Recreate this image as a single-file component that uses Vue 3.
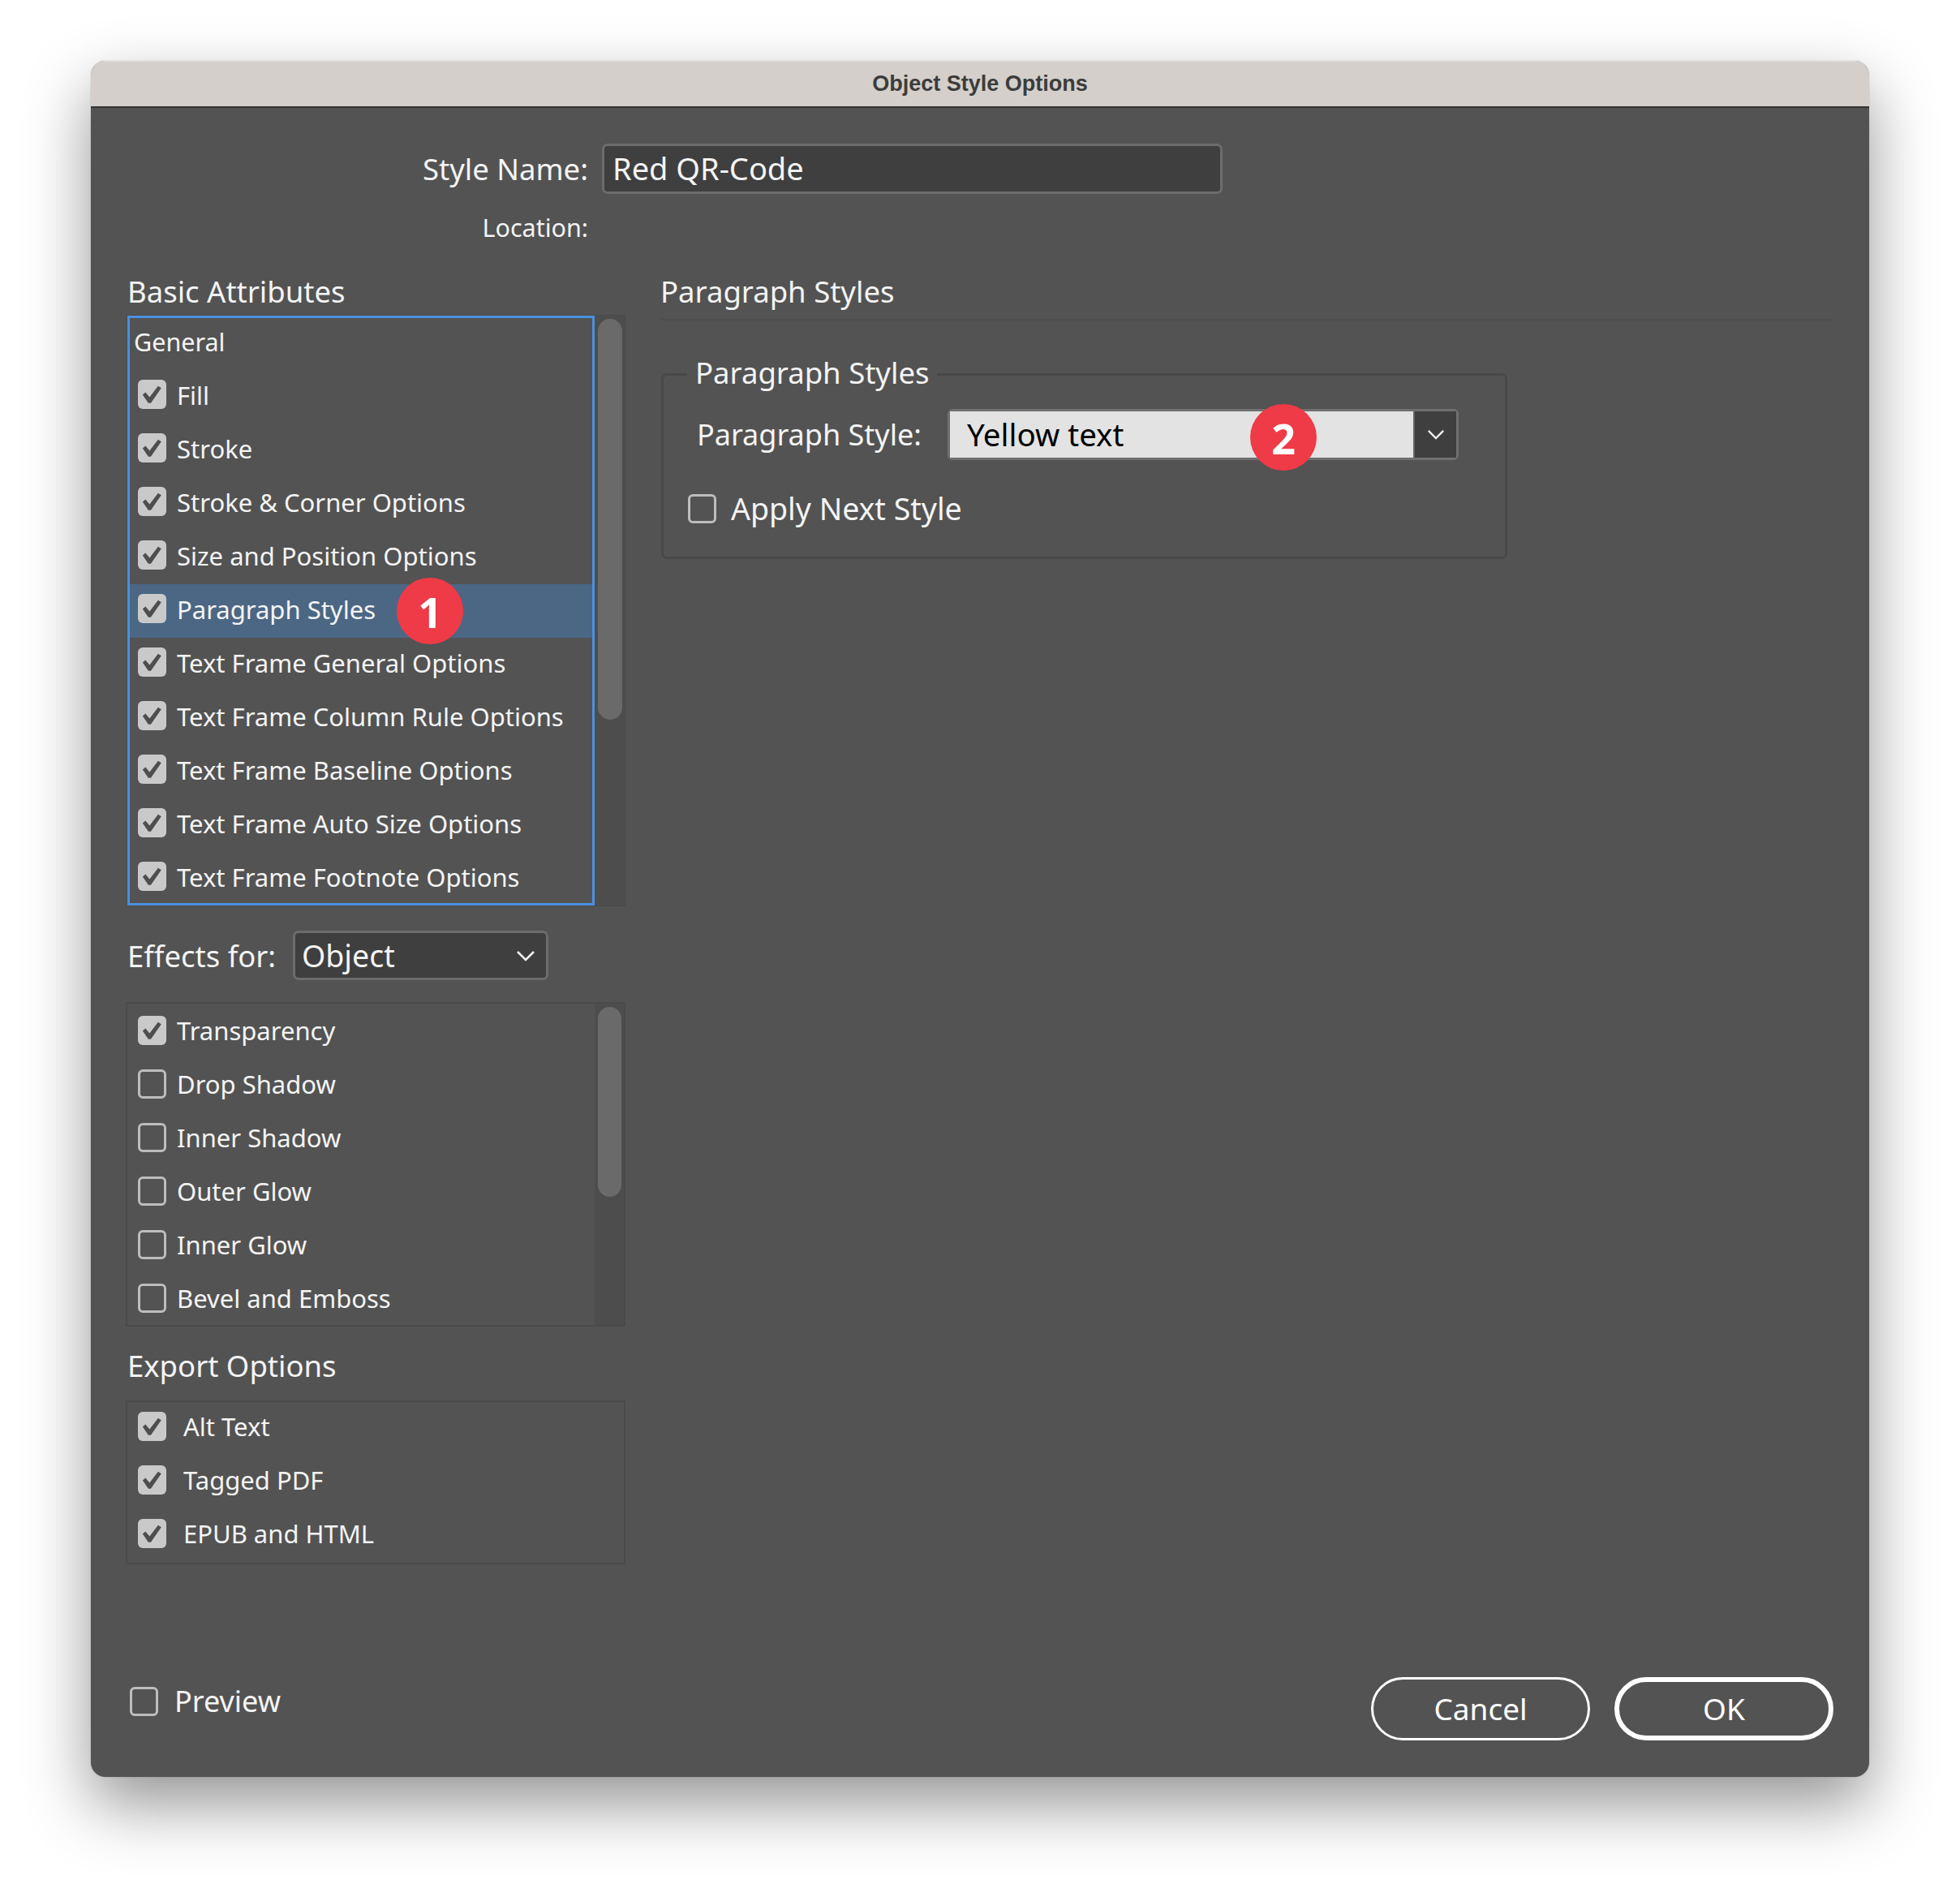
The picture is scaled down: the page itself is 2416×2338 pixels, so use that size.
<script setup>
const basicRows = [
  { label: 'Fill', on: true }, { label: 'Stroke', on: true }, { label: 'Stroke & Corner Options', on: true },
  { label: 'Size and Position Options', on: true }, { label: 'Paragraph Styles', on: true, selected: true },
  { label: 'Text Frame General Options', on: true }, { label: 'Text Frame Column Rule Options', on: true },
  { label: 'Text Frame Baseline Options', on: true }, { label: 'Text Frame Auto Size Options', on: true },
  { label: 'Text Frame Footnote Options', on: true }
]
const effectRows = [
  { label: 'Transparency', on: true }, { label: 'Drop Shadow', on: false }, { label: 'Inner Shadow', on: false },
  { label: 'Outer Glow', on: false }, { label: 'Inner Glow', on: false }, { label: 'Bevel and Emboss', on: false }
]
const exportRows = ['Alt Text', 'Tagged PDF', 'EPUB and HTML']
const checkPath = 'M6 18.5l3.6-3 5.2 6L25.6 7.5l4 2.6L16.4 29h-3.2z'
</script>

<template>
  <div class="page">
    <div class="dialog">
      <div class="titlebar">Object Style Options</div>
      <div class="name-row">
        <span class="name-label">Style Name:</span>
        <div class="name-input">Red QR-Code</div>
      </div>
      <div class="location-row">Location:</div>

      <div class="columns">
        <div class="left">
          <div class="heading pad2">Basic Attributes</div>
          <div class="basic-box">
            <div class="frame">
              <div class="general">General</div>
              <div v-for="r in basicRows" :key="r.label" class="row basic-row" :class="{ selected: r.selected }">
                <span class="check on"><svg viewBox="0 0 36 36" width="35" height="36"><path :d="checkPath" fill="#4e4e4e" /></svg></span>
                <span class="row-text">{{ r.label }}</span>
                <span v-if="r.selected" class="badge badge-one">1</span>
              </div>
            </div>
            <div class="track"><div class="thumb thumb-basic"></div></div>
          </div>

          <div class="effects-row">
            <span class="effects-label">Effects for:</span>
            <div class="select-dark">
              <span>Object</span>
              <svg viewBox="0 0 24 14" width="24" height="14"><path d="M2 2l10 10L22 2" fill="none" stroke="#f0f0f0" stroke-width="2.6" /></svg>
            </div>
          </div>

          <div class="effects-box">
            <div class="effects-rows">
              <div v-for="r in effectRows" :key="r.label" class="row">
                <span class="check" :class="{ on: r.on }"><svg v-if="r.on" viewBox="0 0 36 36" width="35" height="36"><path :d="checkPath" fill="#4e4e4e" /></svg></span>
                <span class="row-text">{{ r.label }}</span>
              </div>
            </div>
            <div class="track"><div class="thumb thumb-effects"></div></div>
          </div>

          <div class="heading pad2 export-heading">Export Options</div>
          <div class="export-box">
            <div class="export-rows">
              <div v-for="r in exportRows" :key="r" class="row export-row">
                <span class="check on"><svg viewBox="0 0 36 36" width="35" height="36"><path :d="checkPath" fill="#4e4e4e" /></svg></span>
                <span class="row-text">{{ r }}</span>
              </div>
            </div>
          </div>
        </div>

        <div class="right">
          <div class="heading right-heading">Paragraph Styles</div>
          <fieldset class="group">
            <legend class="legend">Paragraph Styles</legend>
            <div class="para-row">
              <span class="para-label">Paragraph Style:</span>
              <div class="combo">
                <div class="combo-field">Yellow text<span class="badge badge-two">2</span></div>
                <div class="combo-btn">
                  <svg viewBox="0 0 24 14" width="22" height="13"><path d="M2 2l10 10L22 2" fill="none" stroke="#f0f0f0" stroke-width="2.6" /></svg>
                </div>
              </div>
            </div>
            <div class="apply-row">
              <span class="check"></span>
              <span class="apply-text">Apply Next Style</span>
            </div>
          </fieldset>
        </div>
      </div>

      <div class="footer">
        <div class="preview">
          <span class="check"></span>
          <span class="preview-text">Preview</span>
        </div>
        <div class="buttons">
          <div class="btn">Cancel</div>
          <div class="btn primary">OK</div>
        </div>
      </div>
    </div>
  </div>
</template>

<style>
html, body { margin: 0; background: #ffffff; }
</style>

<style scoped>
.page {
  width: 2416px;
  height: 2338px;
  padding: 75px 0 0 112px;
  box-sizing: border-box;
  overflow: hidden;
  background: #ffffff;
  font-family: "Noto Sans", "Open Sans", sans-serif;
  color: #f4f4f4;
}
.dialog {
  width: 2192px;
  height: 2115px;
  display: flex;
  flex-direction: column;
  background: #535353;
  border-radius: 18px;
  box-shadow: 0 34px 80px rgba(0, 0, 0, 0.42), 0 0 0 1px rgba(0, 0, 0, 0.06);
}
.titlebar {
  height: 58px;
  flex: none;
  box-sizing: border-box;
  background: #d4cfcb;
  border-radius: 18px 18px 0 0;
  border-bottom: 2px solid #333;
  border-top: 1px solid #e4e1de;
  color: #3c3c3c;
  font-size: 27px;
  font-weight: 700;
  font-family: "Liberation Sans", sans-serif;
  display: flex;
  align-items: center;
  justify-content: center;
}
.name-row {
  margin-top: 44px;
  display: flex;
  align-items: center;
  gap: 17px;
}
.name-label {
  width: 613px;
  text-align: right;
  font-size: 36.5px;
}
.name-input {
  width: 765px;
  height: 62px;
  box-sizing: border-box;
  background: #3f3f3f;
  border: 3px solid #6c6c6c;
  border-radius: 7px;
  padding-left: 10px;
  font-size: 38px;
  line-height: 54px;
}
.location-row {
  margin-top: 21px;
  width: 613px;
  text-align: right;
  font-size: 30.5px;
  line-height: 40px;
}
.columns {
  margin-top: 37px;
  padding: 0 44px 0 43px;
  display: grid;
  grid-template-columns: 616px 1446px;
  column-gap: 43px;
}
.heading {
  height: 44px;
  line-height: 44px;
  font-size: 36.5px;
}
.pad2 { padding-left: 2px; }
.basic-box {
  margin: 7px 0 0 1px;
  width: 615px;
  height: 729px;
  box-sizing: border-box;
  border: 1px solid #4a4a4a;
  display: flex;
}
.frame {
  position: relative;
  width: 576px;
  flex: none;
  padding-top: 1px;
  box-sizing: border-box;
}
.frame::after {
  content: "";
  position: absolute;
  inset: 0;
  border: 3px solid #4a90e0;
  pointer-events: none;
}
.general {
  height: 66px;
  line-height: 62px;
  padding-left: 8px;
  font-size: 30.5px;
}
.row {
  position: relative;
  height: 66px;
  display: flex;
  align-items: center;
  padding-left: 13px;
  gap: 13px;
}
.basic-row .check { margin-top: -6px; }
.basic-row .row-text { margin-top: -5px; }
.row.selected { background: #4b6784; }
.row-text { font-size: 31px; white-space: nowrap; }
.check {
  width: 35px;
  height: 36px;
  flex: none;
  box-sizing: border-box;
  border: 3px solid #bdbdbd;
  border-radius: 6px;
  display: block;
  background: transparent;
}
.check.on {
  border: none;
  background: #c9c9c9;
}
.check svg { display: block; }
.track {
  flex: 1;
  background: #4d4d4d;
  padding: 4px 3px 0 4px;
  min-width: 0;
}
.thumb {
  background: #6a6a6a;
  border-radius: 15px;
}
.thumb-basic { height: 494px; }
.thumb-effects { height: 234px; }
.badge {
  position: absolute;
  width: 82px;
  height: 82px;
  border-radius: 50%;
  background: #ef3a47;
  color: #ffffff;
  font-weight: 700;
  font-size: 52px;
  font-family: "Open Sans", sans-serif;
  display: flex;
  align-items: center;
  justify-content: center;
}
.badge-one { left: 332px; top: -8px; }
.badge-two { left: 370px; top: -9px; }
.effects-row {
  margin-top: 30px;
  height: 61px;
  display: flex;
  align-items: center;
  padding-left: 2px;
}
.effects-label { width: 204px; flex: none; font-size: 36.5px; }
.select-dark {
  width: 315px;
  height: 61px;
  box-sizing: border-box;
  background: #3f3f3f;
  border: 3px solid #6c6c6c;
  border-radius: 7px;
  display: flex;
  align-items: center;
  justify-content: space-between;
  padding: 0 13px 0 8px;
  font-size: 37.5px;
  line-height: 52px;
}
.effects-box {
  margin-top: 27px;
  height: 400px;
  box-sizing: border-box;
  border: 2px solid #4a4a4a;
  display: flex;
}
.effects-rows { width: 576px; flex: none; box-sizing: border-box; }
.export-heading { margin-top: 26px; }
.export-box {
  margin-top: 21px;
  height: 202px;
  box-sizing: border-box;
  border: 2px solid #4a4a4a;
}
.export-rows { margin-top: -3px; }
.export-row { gap: 21px; }
.right-heading {
  box-sizing: border-box;
  border-bottom: 2px solid #4d4d4d;
  line-height: 44px;
  height: 58px;
}
.group {
  margin: 42px 0 0 1px;
  padding: 0;
  width: 1043px;
  height: 252px;
  box-sizing: border-box;
  border: 3px solid #484848;
  border-radius: 7px;
}
.legend {
  margin-left: 29px;
  padding: 0 10px;
  height: 48px;
  line-height: 44px;
  font-size: 36.5px;
}
.para-row {
  margin: 19px 0 0 41px;
  display: flex;
  align-items: center;
}
.para-label { width: 309px; flex: none; font-size: 36px; }
.combo {
  width: 630px;
  height: 63px;
  box-sizing: border-box;
  border: 3px solid #707070;
  border-radius: 6px;
  display: flex;
}
.combo-field {
  position: relative;
  width: 571px;
  flex: none;
  box-sizing: border-box;
  background: #e3e3e3;
  color: #000;
  padding-left: 21px;
  font-size: 38.5px;
  line-height: 57px;
}
.combo-btn {
  flex: 1;
  background: #3f3f3f;
  border-left: 2px solid #666;
  display: flex;
  align-items: center;
  justify-content: center;
}
.apply-row {
  margin: 42px 0 0 30px;
  display: flex;
  align-items: center;
  gap: 18px;
}
.apply-text { font-size: 37.5px; line-height: 36px; }
.footer {
  margin-top: auto;
  padding: 0 44px 45px 48px;
  display: flex;
  justify-content: space-between;
  align-items: flex-start;
}
.preview {
  margin-top: 12px;
  display: flex;
  align-items: center;
  gap: 20px;
}
.preview-text { font-size: 36px; line-height: 36px; }
.buttons { display: flex; gap: 30px; }
.btn {
  width: 270px;
  height: 78px;
  box-sizing: border-box;
  border: 3px solid #fff;
  border-radius: 39px;
  display: flex;
  align-items: center;
  justify-content: center;
  padding-bottom: 2px;
  font-size: 37px;
  color: #fff;
}
.btn.primary { border-width: 6px; }
</style>
